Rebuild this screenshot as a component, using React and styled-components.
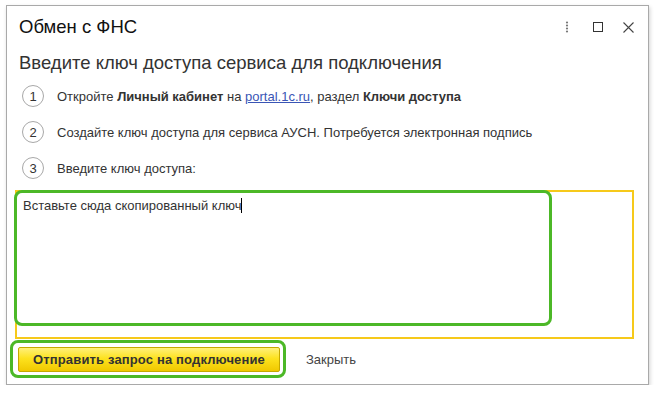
import React from 'react';
import styled, { createGlobalStyle } from 'styled-components';

const Global = createGlobalStyle`
  html, body {
    margin: 0;
    padding: 0;
    background: #fff;
  }
  body {
    font-family: "Liberation Sans", Arial, sans-serif;
    color: #333;
  }
`;

const Window = styled.div`
  margin: 5px 0 0 6px;
  width: 641px;
  height: 378px;
  border: 1px solid #a9a9a9;
  background: #fff;
  box-shadow: 1px 2px 4px rgba(0, 0, 0, 0.18);
  display: flex;
  flex-direction: column;
`;

const TitleBar = styled.div`
  height: 42px;
  display: flex;
  align-items: center;
  justify-content: space-between;
  padding: 0 4px 0 12px;
`;

const Title = styled.div`
  font-size: 18.5px;
  color: #111;
`;

const Controls = styled.div`
  display: flex;
  align-items: center;
`;

const IconButton = styled.div`
  width: 31px;
  height: 20px;
  display: flex;
  align-items: center;
  justify-content: center;
`;

const Heading = styled.div`
  height: 30px;
  line-height: 30px;
  padding-left: 12px;
  font-size: 18.5px;
  color: #333;
`;

const Steps = styled.div`
  display: flex;
  flex-direction: column;
`;

const Step = styled.div`
  height: 36px;
  display: flex;
  align-items: center;
  padding-left: 15px;
  gap: 13px;
`;

const Num = styled.div`
  width: 20px;
  height: 20px;
  border: 1px solid #a8a8a8;
  border-radius: 50%;
  display: flex;
  align-items: center;
  justify-content: center;
  font-size: 13px;
  color: #333;
`;

const StepText = styled.div`
  font-size: 13px;
  color: #333;
  b {
    font-weight: bold;
  }
`;

const Link = styled.span`
  color: #3a55b5;
  text-decoration: underline;
`;

const KeyField = styled.div`
  position: relative;
  margin: 4px 14px 0 8px;
  height: 145px;
  border: 2px solid #f6c91a;
`;

const Placeholder = styled.div`
  padding: 6px 6px;
  font-size: 13px;
  line-height: 16px;
  color: #333;
`;

const Caret = styled.span`
  display: inline-block;
  width: 1px;
  height: 15px;
  background: #000;
  vertical-align: -3px;
`;

const Highlight = styled.div`
  position: absolute;
  left: ${(p) => p.$left}px;
  top: ${(p) => p.$top}px;
  width: ${(p) => p.$width}px;
  height: ${(p) => p.$height}px;
  box-sizing: border-box;
  border: 3px solid #4cb827;
  border-radius: 8px;
  pointer-events: none;
`;

const Footer = styled.div`
  display: flex;
  align-items: center;
  margin-top: 8px;
  padding-left: 11px;
  gap: 20px;
`;

const ButtonWrap = styled.div`
  position: relative;
`;

const PrimaryButton = styled.div`
  box-sizing: border-box;
  width: 262px;
  height: 25px;
  display: flex;
  align-items: center;
  justify-content: center;
  border: 1px solid #c6a800;
  border-radius: 2px;
  background: linear-gradient(#fff07a 0%, #fde21f 45%, #f0c800 100%);
  font-size: 13px;
  font-weight: bold;
  letter-spacing: 0.15px;
  color: #333;
`;

const TextButton = styled.div`
  padding: 0 6px;
  font-size: 13px;
  color: #444;
`;

const App = () => {
  const steps = [
    {
      n: 1,
      text: (
        <>
          Откройте <b>Личный кабинет</b> на <Link>portal.1c.ru</Link>, раздел <b>Ключи доступа</b>
        </>
      ),
    },
    { n: 2, text: 'Создайте ключ доступа для сервиса АУСН. Потребуется электронная подпись' },
    { n: 3, text: 'Введите ключ доступа:' },
  ];

  return (
    <>
      <Global />
      <Window>
        <TitleBar>
          <Title>Обмен с ФНС</Title>
          <Controls>
            <IconButton>
              <svg width="4" height="12" viewBox="0 0 4 12">
                <circle cx="2" cy="1.5" r="1.1" fill="#777" />
                <circle cx="2" cy="4.5" r="1.1" fill="#777" />
                <circle cx="2" cy="7.5" r="1.1" fill="#777" />
                <circle cx="2" cy="10.5" r="1.1" fill="#777" />
              </svg>
            </IconButton>
            <IconButton>
              <svg width="10" height="10" viewBox="0 0 10 10">
                <rect x="0.5" y="0.5" width="9" height="9" fill="none" stroke="#333" />
              </svg>
            </IconButton>
            <IconButton>
              <svg width="11" height="11" viewBox="0 0 11 11">
                <path d="M0.5 0.5 L10.5 10.5 M10.5 0.5 L0.5 10.5" stroke="#444" strokeWidth="1.1" />
              </svg>
            </IconButton>
          </Controls>
        </TitleBar>

        <Heading>Введите ключ доступа сервиса для подключения</Heading>

        <Steps>
          {steps.map((s) => (
            <Step key={s.n}>
              <Num>{s.n}</Num>
              <StepText>{s.text}</StepText>
            </Step>
          ))}
        </Steps>

        <KeyField>
          <Placeholder>
            Вставьте сюда скопированный ключ<Caret />
          </Placeholder>
          <Highlight $left={-3} $top={-2} $width={538} $height={136} />
        </KeyField>

        <Footer>
          <ButtonWrap>
            <PrimaryButton>Отправить запрос на подключение</PrimaryButton>
            <Highlight $left={-8} $top={-7} $width={276} $height={38} />
          </ButtonWrap>
          <TextButton>Закрыть</TextButton>
        </Footer>
      </Window>
    </>
  );
};

export default App;
